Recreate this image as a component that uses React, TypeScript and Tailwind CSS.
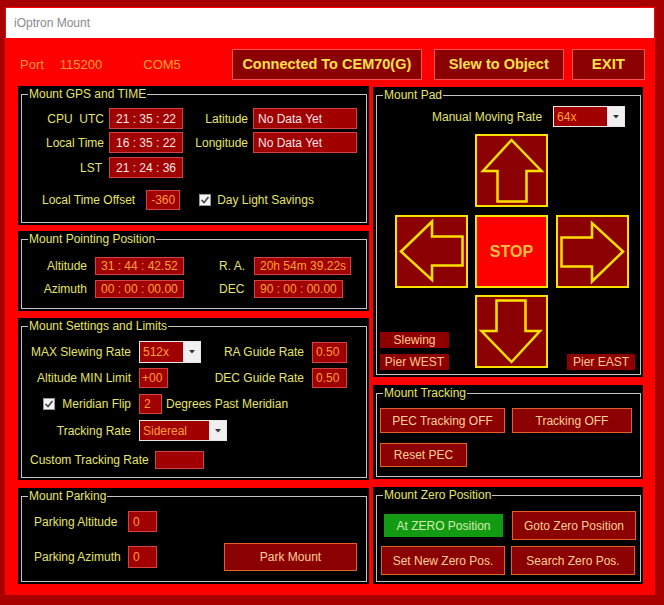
import React from "react";

const Panel: React.FC<{ title: string; className: string; children?: React.ReactNode }> = ({ title, className, children }) => (
  <div className={`bg-black pt-[1px] pl-[3px] pr-[2px] pb-[2px] ${className}`}>
    <fieldset className="h-full min-w-0 border border-[#c4c4c4]">
      <legend className="ml-[6px] px-[1px] text-[12px] leading-[14px] text-[#e4e46a]">{title}</legend>
      {children}
    </fieldset>
  </div>
);

const Box: React.FC<{ className: string; children?: React.ReactNode }> = ({ className, children }) => (
  <div className={`flex items-center whitespace-pre border border-[#d04444] bg-[#a00000] text-[12px] ${className}`}>
    {children}
  </div>
);

const Btn: React.FC<{ className: string; children: React.ReactNode }> = ({ className, children }) => (
  <div className={`flex items-center justify-center border border-[#e0602a] bg-[#8b0000] text-[12px] text-[#ffd09a] ${className}`}>
    {children}
  </div>
);

const Select: React.FC<{ className: string; value: string }> = ({ className, value }) => (
  <div className={`flex border border-[#e8e8e8] ${className}`}>
    <div className="flex flex-1 items-center bg-[#a00000] pl-[3px] text-[12px] text-[#ff9f30]">{value}</div>
    <div className="flex w-[17px] items-center justify-center bg-[#f0f0f0]">
      <svg width="6" height="4" viewBox="0 0 6 4">
        <path d="M0 0 L6 0 L3 3.5 Z" fill="#333" />
      </svg>
    </div>
  </div>
);

const Check: React.FC = () => (
  <div className="flex h-[12px] w-[12px] items-center justify-center border border-[#999] bg-[#f4f4f4]">
    <svg width="10" height="10" viewBox="0 0 10 10">
      <path d="M1.5 5 L4 7.5 L8.5 2" fill="none" stroke="#444" strokeWidth="1.6" />
    </svg>
  </div>
);

const ArrowBtn: React.FC<{ rot: number }> = ({ rot }) => (
  <div className="h-[73px] w-[73px] border-2 border-[#ffe100] bg-[#8b0000]">
    <svg width="69" height="69" viewBox="2 2 69 69">
      <polygon
        points="36.5,6 66.5,37 51.5,37 51.5,67.5 22.5,67.5 22.5,37 8,37"
        fill="none"
        stroke="#ffe100"
        strokeWidth="2.5"
        transform={`rotate(${rot} 36.5 36.5)`}
      />
    </svg>
  </div>
);

export default function App() {
  return (
    <div className="h-[605px] w-[664px] bg-[#a80000] pt-[7px] pr-[9px] pb-[10px] pl-[5px] font-['Liberation_Sans',Arial,sans-serif] text-[12px] text-[#e4e46a]">
      <div className="flex h-full flex-col bg-[#ff0000]">
        {/* title bar */}
        <div className="mx-[1px] mt-[1px] flex h-[30px] items-center bg-white pl-[8px] text-[12px] text-[#8a8a8a]">
          iOptron Mount
        </div>

        {/* top row */}
        <div className="mt-[11px] flex h-[31px] items-center pl-[15px] text-[13px] text-[#ffa030]">
          <span className="text-[#ff9a40]">Port</span>
          <span className="ml-[16px]">115200</span>
          <span className="ml-[41px]">COM5</span>
          <div className="ml-[51px] flex h-[31px] w-[190px] items-center justify-center border border-[#ff5050] bg-[#8b0000] text-[14.5px] font-bold text-[#ffe04a]">
            Connected To CEM70(G)
          </div>
          <div className="ml-[12px] flex h-[31px] w-[130px] items-center justify-center border border-[#ff5050] bg-[#8b0000] text-[14.5px] font-bold text-[#ffe04a]">
            Slew to Object
          </div>
          <div className="ml-[8px] flex h-[31px] w-[73px] items-center justify-center border border-[#ff5050] bg-[#8b0000] text-[15px] font-bold text-[#ffe04a]">
            EXIT
          </div>
        </div>

        <div className="mt-[6px] flex gap-[4px] pl-[13px]">
          {/* left column */}
          <div className="flex w-[351px] flex-col">
            <Panel title="Mount GPS and TIME" className="h-[139px]">
              <div className="mt-[7px] flex h-[21px] items-center">
                <span className="w-[82px] whitespace-pre text-right">CPU  UTC</span>
                <Box className="ml-[5px] h-[21px] w-[74px] justify-center text-[#ffe4e4]">21 : 35 : 22</Box>
                <span className="w-[65px] text-right">Latitude</span>
                <Box className="ml-[5px] h-[21px] w-[104px] pl-[4px] text-[#ffe4e4]">No Data Yet</Box>
              </div>
              <div className="mt-[3px] flex h-[21px] items-center">
                <span className="w-[82px] text-right">Local Time</span>
                <Box className="ml-[5px] h-[21px] w-[74px] justify-center text-[#ffe4e4]">16 : 35 : 22</Box>
                <span className="w-[65px] text-right">Longitude</span>
                <Box className="ml-[5px] h-[21px] w-[104px] pl-[4px] text-[#ffe4e4]">No Data Yet</Box>
              </div>
              <div className="mt-[4px] flex h-[21px] items-center">
                <span className="w-[80px] text-right">LST</span>
                <Box className="ml-[7px] h-[21px] w-[74px] justify-center text-[#ffe4e4]">21 : 24 : 36</Box>
              </div>
              <div className="mt-[12px] flex h-[20px] items-center pl-[20px]">
                <span>Local Time Offset</span>
                <Box className="ml-[11px] h-[20px] w-[34px] justify-center text-[#ff9a40]">-360</Box>
                <div className="ml-[19px]">
                  <Check />
                </div>
                <span className="ml-[6px]">Day Light Savings</span>
              </div>
            </Panel>

            <Panel title="Mount Pointing Position" className="mt-[6px] h-[80px]">
              <div className="mt-[11px] flex h-[18px] items-center">
                <span className="w-[65px] text-right">Altitude</span>
                <Box className="ml-[8px] h-[18px] w-[89px] pl-[5px] text-[#ffa030]">31 : 44 : 42.52</Box>
                <span className="ml-[35px] w-[35px]">R. A.</span>
                <Box className="h-[18px] w-[97px] pl-[5px] text-[#ffa030]">20h 54m 39.22s</Box>
              </div>
              <div className="mt-[5px] flex h-[18px] items-center">
                <span className="w-[65px] text-right">Azimuth</span>
                <Box className="ml-[8px] h-[18px] w-[89px] pl-[5px] text-[#ffa030]">00 : 00 : 00.00</Box>
                <span className="ml-[35px] w-[35px]">DEC</span>
                <Box className="h-[18px] w-[89px] pl-[5px] text-[#ffa030]">90 : 00 : 00.00</Box>
              </div>
            </Panel>

            <Panel title="Mount Settings and Limits" className="mt-[7px] h-[162px]">
              <div className="mt-[8px] flex h-[22px] items-center">
                <span className="w-[109px] text-right">MAX Slewing Rate</span>
                <Select className="ml-[8px] h-[22px] w-[62px]" value="512x" />
                <span className="w-[103px] text-right">RA Guide Rate</span>
                <Box className="ml-[8px] h-[21px] w-[35px] pl-[3px] text-[#ff9f30]">0.50</Box>
              </div>
              <div className="mt-[5px] flex h-[20px] items-center">
                <span className="w-[109px] text-right">Altitude MIN Limit</span>
                <Box className="ml-[8px] h-[20px] w-[29px] pl-[2px] text-[#ff9f30]">+00</Box>
                <span className="w-[136px] text-right">DEC Guide Rate</span>
                <Box className="ml-[8px] h-[20px] w-[35px] pl-[3px] text-[#ff9f30]">0.50</Box>
              </div>
              <div className="mt-[6px] flex h-[20px] items-center">
                <div className="flex w-[109px] items-center justify-end">
                  <Check />
                  <span className="ml-[7px]">Meridian Flip</span>
                </div>
                <Box className="ml-[8px] h-[20px] w-[23px] pl-[4px] text-[#ff9f30]">2</Box>
                <span className="ml-[4px]">Degrees Past Meridian</span>
              </div>
              <div className="mt-[6px] flex h-[21px] items-center">
                <span className="w-[109px] text-right">Tracking Rate</span>
                <Select className="ml-[8px] h-[21px] w-[88px]" value="Sidereal" />
              </div>
              <div className="mt-[10px] flex h-[18px] items-center pl-[8px]">
                <span>Custom Tracking Rate</span>
                <Box className="ml-[6px] h-[18px] w-[49px]" />
              </div>
            </Panel>

            <Panel title="Mount Parking" className="mt-[8px] h-[96px]">
              <div className="mt-[8px] flex h-[21px] items-center pl-[12px]">
                <span className="w-[94px]">Parking Altitude</span>
                <Box className="h-[21px] w-[29px] pl-[4px] text-[#ff9f30]">0</Box>
              </div>
              <div className="mt-[11px] flex h-[28px] items-center pl-[12px]">
                <span className="w-[94px]">Parking Azimuth</span>
                <Box className="h-[22px] w-[29px] pl-[4px] text-[#ff9f30]">0</Box>
                <Btn className="ml-[67px] h-[28px] w-[133px] text-[#ffc080]">Park Mount</Btn>
              </div>
            </Panel>
          </div>

          {/* right column */}
          <div className="mt-[1px] flex w-[270px] flex-col">
            <Panel title="Mount Pad" className="h-[290px]">
              <div className="mt-[4px] flex h-[21px] items-center pl-[55px]">
                <span>Manual Moving Rate</span>
                <Select className="ml-[11px] h-[21px] w-[72px]" value="64x" />
              </div>
              <div className="mt-[7px] pl-[98px]">
                <ArrowBtn rot={0} />
              </div>
              <div className="mt-[8px] flex pl-[18px]">
                <ArrowBtn rot={-90} />
                <div className="ml-[7px] flex h-[73px] w-[73px] items-center justify-center border-2 border-[#ffe100] bg-[#ff0000] text-[16px] font-bold text-[#ffc040]">
                  STOP
                </div>
                <div className="ml-[8px]">
                  <ArrowBtn rot={90} />
                </div>
              </div>
              <div className="mt-[7px] flex items-end">
                <div className="mb-[-2px] flex w-[98px] flex-col gap-[6px] pl-[3px]">
                  <div className="flex h-[16px] w-[69px] items-center justify-center bg-[#8e0000] text-[#ffc890]">Slewing</div>
                  <div className="flex h-[16px] w-[69px] items-center justify-center bg-[#8e0000] text-[#ffc890]">Pier WEST</div>
                </div>
                <ArrowBtn rot={180} />
                <div className="mb-[-2px] ml-[19px] flex h-[16px] w-[68px] items-center justify-center bg-[#8e0000] text-[#ffc890]">
                  Pier EAST
                </div>
              </div>
            </Panel>

            <Panel title="Mount Tracking" className="mt-[8px] h-[94px]">
              <div className="mt-[8px] flex gap-[7px] pl-[3px]">
                <Btn className="h-[25px] w-[125px]">PEC Tracking OFF</Btn>
                <Btn className="h-[25px] w-[120px]">Tracking OFF</Btn>
              </div>
              <div className="mt-[10px] pl-[3px]">
                <Btn className="h-[24px] w-[87px]">Reset PEC</Btn>
              </div>
            </Panel>

            <Panel title="Mount Zero Position" className="mt-[8px] h-[97px]">
              <div className="mt-[9px] flex h-[29px] items-center">
                <div className="ml-[7px] flex h-[23px] w-[119px] items-center justify-center bg-[#139a13] text-[#d4f0b0]">
                  At ZERO Position
                </div>
                <Btn className="ml-[9px] h-[29px] w-[124px]">Goto Zero Position</Btn>
              </div>
              <div className="mt-[6px] flex gap-[6px] pl-[4px]">
                <Btn className="h-[29px] w-[124px]">Set New Zero Pos.</Btn>
                <Btn className="h-[29px] w-[124px]">Search Zero Pos.</Btn>
              </div>
            </Panel>
          </div>
        </div>
      </div>
    </div>
  );
}
